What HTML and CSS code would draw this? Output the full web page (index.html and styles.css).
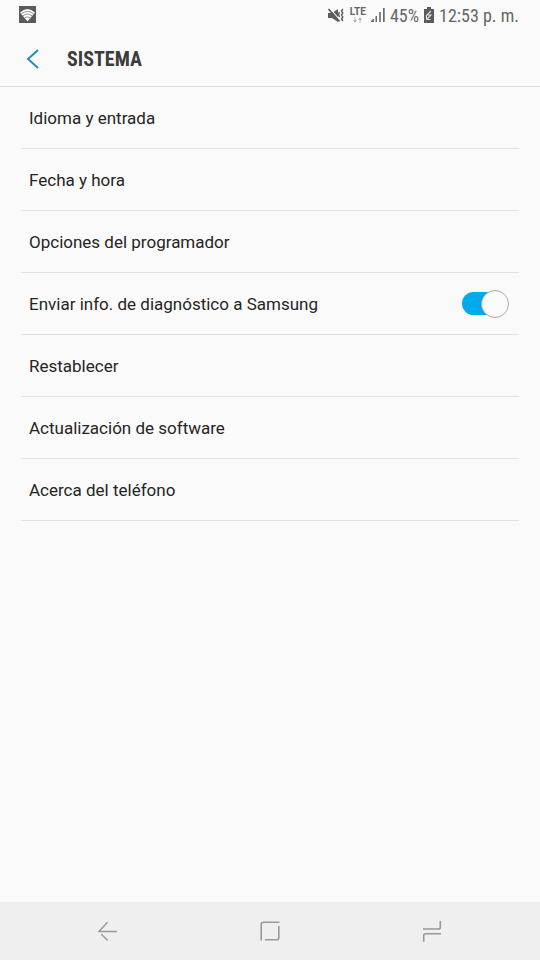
FILE: index.html
```html
<!DOCTYPE html>
<html lang="es">
<head>
<meta charset="utf-8">
<meta name="viewport" content="width=device-width, initial-scale=1">
<title>Sistema</title>
<link rel="stylesheet" href="styles.css">
</head>
<body>
<div class="status">
  <svg class="wifi" width="17" height="17" viewBox="0 0 17 17" aria-hidden="true">
    <path fill="#5a5a5a" d="M0 0h17v17H0z"/>
    <path fill="#fafafa" d="M8.500 15.500 1 6.500Q8.500-.5 16 6.500z"/>
    <path fill="none" stroke="#8a8a8a" stroke-width=".9" d="M2.500 7.700q6-4.500 12 0M4 9.800q4.500-3.400 9 0M5.600 11.900q2.900-2.200 5.800 0"/>
  </svg>
  <div class="status-info">
    <svg class="mute" width="17" height="16" viewBox="0 0 17 16" aria-hidden="true">
      <path fill="#5c5c5c" d="M0 5h4l6-4v13l-6-4H0z"/>
      <path stroke="#fafafa" stroke-width="1.200" d="m2.200.8 10 11.500"/>
      <path stroke="#5c5c5c" stroke-width="1.700" d="m.5 1 11 12.500"/>
      <path fill="none" stroke="#5c5c5c" stroke-width="1.400" d="m11.500 4-1 2.500 1 2.500M14.800 1l-1.300 2 1.300 2-1.300 2 1.300 2-1.300 2 1.300 2"/>
    </svg>
    <span class="lte">LTE
      <svg width="9" height="6" viewBox="0 0 9 6" aria-hidden="true"><path fill="#b5b5b5" d="M2 6 0 3h1.500V0h1v3H4zM7 0l2 3H7.500v3h-1V3H5z"/></svg>
    </span>
    <svg class="signal" width="14" height="15" viewBox="0 0 14 15" aria-hidden="true">
      <path fill="#6c6c6c" d="M0 14v-1l2-2h1v3zM4.500 8H6v6H4.500zM8.200 4h1.600v10H8.200zM12 0h1.700v14H12z"/>
    </svg>
    <span class="percent">45%</span>
    <svg class="battery" width="10" height="16" viewBox="0 0 10 16" aria-hidden="true">
      <path fill="#5c5c5c" d="M0 2h3V0h4v2h3v14H0z"/>
      <path fill="none" stroke="#ddd" stroke-width="1.100" d="M7 4 3 8h4l-4 4M2.500 8.500v4h4"/>
    </svg>
    <time>12:53 p. m.</time>
  </div>
</div>
<header class="header">
  <button class="back" type="button" aria-label="Volver">
    <svg width="14" height="20" viewBox="0 0 14 20" aria-hidden="true"><path fill="none" stroke="#1e88b9" stroke-width="1.800" d="M12 1 2 10l10 9"/></svg>
  </button>
  <h1>SISTEMA</h1>
</header>
<main>
  <ul class="list">
    <li><a class="row" href="#idioma">Idioma y entrada</a></li>
    <li><a class="row" href="#fecha">Fecha y hora</a></li>
    <li><a class="row" href="#opciones">Opciones del programador</a></li>
    <li><label class="row" for="diagnostico">Enviar info. de diagnóstico a Samsung <input class="switch" id="diagnostico" type="checkbox" checked></label></li>
    <li><a class="row" href="#restablecer">Restablecer</a></li>
    <li><a class="row" href="#actualizacion">Actualización de software</a></li>
    <li><a class="row" href="#acerca">Acerca del teléfono</a></li>
  </ul>
</main>
<nav class="navbar">
  <button type="button" aria-label="Atrás">
    <svg width="20" height="20" viewBox="0 0 20 20" aria-hidden="true"><path fill="none" stroke="#999" stroke-width="1.500" d="M19 10.500H1L9.500 1.200M3.300 13.200l6.400 6.300"/></svg>
  </button>
  <button type="button" aria-label="Inicio">
    <svg width="20" height="20" viewBox="0 0 20 20" aria-hidden="true"><path fill="none" stroke="#999" stroke-width="1.600" d="M1.200 19.500V3.500q0-2.300 2.300-2.300h16M18.800 5v11.500q0 2.300-2.300 2.300H5"/></svg>
  </button>
  <button type="button" aria-label="Recientes">
    <svg width="20" height="22" viewBox="0 0 20 22" aria-hidden="true"><path fill="none" stroke="#999" stroke-width="1.600" d="M1 9h15.500q1.800 0 1.800-1.800V1M19 13.800H3.500q-1.800 0-1.800 1.800v6.200"/></svg>
  </button>
</nav>
</body>
</html>
```
FILE: styles.css
```css
*,
*::before,
*::after {
  box-sizing: border-box;
}

body {
  display: flex;
  flex-direction: column;
  min-height: 100vh;
  margin: 0;
  background: #fafafa;
  color: #252525;
  font-family: Roboto, "Liberation Sans", sans-serif;
}

button {
  display: flex;
  align-items: center;
  justify-content: center;
  padding: 0;
  border: 0;
  background: none;
}

svg {
  display: block;
  flex: none;
}

.status {
  display: flex;
  align-items: center;
  justify-content: space-between;
  height: 31px;
  padding: 0 21px 0 19px;
  color: #666;
  font-family: "Roboto Condensed", Roboto, sans-serif;
  font-size: 18px;
}

.wifi,
.battery {
  margin-bottom: 2px;
}

.status-info {
  display: flex;
  align-items: center;
  gap: 5px;
}

.lte {
  display: flex;
  flex-direction: column;
  align-items: center;
  gap: 1px;
  margin-bottom: 1px;
  font-family: Roboto, sans-serif;
  font-size: 10px;
  font-weight: 700;
  line-height: 9px;
}

.header {
  display: flex;
  align-items: center;
  height: 56px;
  padding: 0 20px;
  border-bottom: 1px solid #e2e2e2;
}

.back {
  width: 26px;
  height: 40px;
}

.header h1 {
  margin: 0 0 0 21px;
  color: #3c3c3c;
  font-family: "Roboto Condensed", Roboto, sans-serif;
  font-size: 20px;
  font-weight: 700;
}

main {
  flex: 1;
}

.list {
  margin: 0;
  padding: 0 21px;
  list-style: none;
}

.row {
  display: flex;
  align-items: center;
  justify-content: space-between;
  height: 62px;
  padding: 0 10px 0 8px;
  border-bottom: 1px solid #e2e2e2;
  color: inherit;
  font-size: 17px;
  text-decoration: none;
}

.switch {
  display: grid;
  align-items: center;
  width: 47px;
  height: 28px;
  margin: 0;
  appearance: none;
}

.switch::before,
.switch::after {
  grid-area: 1 / 1;
  content: "";
}

.switch::before {
  width: 40px;
  height: 23px;
  border-radius: 12px;
  background: #03a9eb;
}

.switch::after {
  justify-self: end;
  width: 28px;
  height: 28px;
  border: 1px solid #aaa;
  border-radius: 50%;
  background: #fafafa;
}

.navbar {
  display: grid;
  grid-template-columns: repeat(3, 1fr);
  height: 58px;
  padding: 0 27px;
  background: #efefef;
}
```
